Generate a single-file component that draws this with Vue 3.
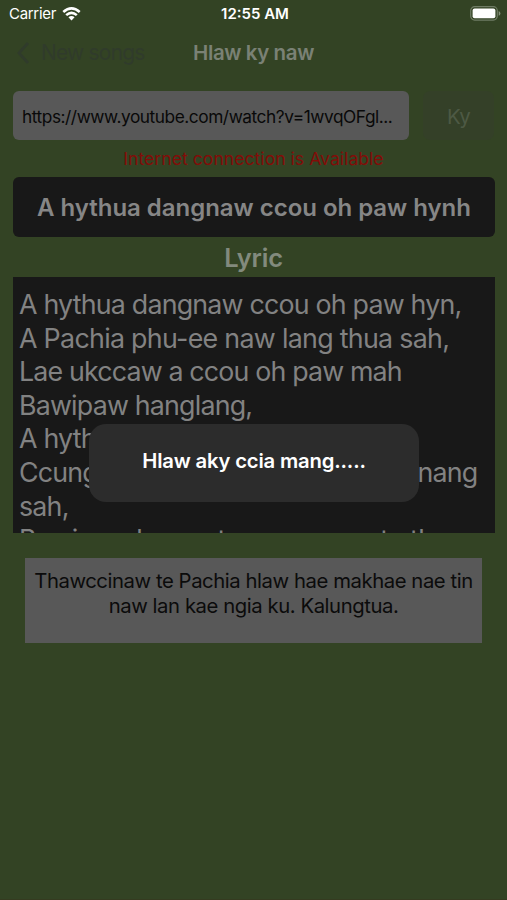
<script setup>
const lyrics = [
  { text: 'A hythua dangnaw ccou oh paw hyn,', cls: 'l1' },
  { text: 'A Pachia phu-ee naw lang thua sah,', cls: 'l2' },
  { text: 'Lae ukccaw a ccou oh paw mah', cls: 'l3' },
  { text: 'Bawipaw hanglang,', cls: 'l4' },
  { text: 'A hythua', cls: 'l5' },
  { text: 'Ccung', tail: 'nang', cls: 'l6' },
  { text: 'sah,', cls: 'l7' },
  { text: 'Bawipaw hanae ta ngae cana ta tha', cls: 'l8' },
]
</script>

<template>
  <main class="screen">
    <header class="status">
      <div class="carrier">
        <span class="carrier-name">Carrier</span>
        <svg class="wifi" viewBox="0 0 20 15" width="19" height="14">
          <path d="M10 14.4 L6.7 11 Q10 8.4 13.3 11 Z" fill="#fff" />
          <path d="M4.3 8.7 Q10 3.8 15.7 8.7 M1.2 5.3 Q10 -2.3 18.8 5.3" fill="none" stroke="#fff" stroke-width="2.8" />
        </svg>
      </div>
      <span class="time">12:55 AM</span>
      <div class="power">
        <svg viewBox="0 0 31 15" width="31" height="15">
          <rect x="0.7" y="0.7" width="26.6" height="13.4" rx="4" fill="none" stroke="#6f7c64" stroke-width="1.2" />
          <rect x="2.6" y="2.6" width="22.8" height="9.6" rx="2" fill="#fff" />
          <path d="M28.7 5 Q30.4 5.6 30.4 7.4 Q30.4 9.2 28.7 9.8 Z" fill="#85917b" />
        </svg>
      </div>
    </header>

    <nav class="nav">
      <div class="back">
        <svg viewBox="0 0 14 24" width="14" height="24">
          <path d="M12 2 L3 12 L12 22" fill="none" stroke="#303b2b" stroke-width="2.8" />
        </svg>
        <span class="back-label">New songs</span>
      </div>
      <span class="title">Hlaw ky naw</span>
    </nav>

    <div class="search">
      <div class="field"><span class="url">https://www.youtube.com/watch?v=1wvqOFgl...</span></div>
      <div class="go">Ky</div>
    </div>
    <p class="connection"><span>Internet connection is Available</span></p>
    <div class="song"><span>A hythua dangnaw ccou oh paw hynh</span></div>
    <h2 class="heading"><span>Lyric</span></h2>

    <section class="lyrics">
      <div v-for="line in lyrics" :key="line.cls" class="line">
        <span :class="line.cls">{{ line.text }}</span>
        <span v-if="line.tail" class="tail">{{ line.tail }}</span>
      </div>
    </section>

    <section class="note">
      <div class="n1">Thawccinaw te Pachia hlaw hae makhae nae tin</div>
      <div class="n2">naw lan kae ngia ku. Kalungtua.</div>
    </section>

    <div class="alert" role="dialog"><span>Hlaw aky ccia mang.....</span></div>
  </main>
</template>

<style>
body { background: #334324; }
</style>

<style scoped>
.screen {
  position: relative;
  box-sizing: border-box;
  width: 507px;
  height: 900px;
  overflow: hidden;
  background: #334324;
  border-bottom: 1px solid #353b20;
  font-family: Inter, "Liberation Sans", sans-serif;
  white-space: nowrap;
}
.status {
  display: grid;
  grid-template-columns: 1fr auto 1fr;
  align-items: center;
  height: 27px;
  padding: 0 6px 0 9px;
  color: #fff;
}
.carrier { display: flex; align-items: center; gap: 6px; font-size: 15px; letter-spacing: -0.3px; }
.time { font-size: 15px; font-weight: 600; }
.power { display: flex; justify-content: flex-end; }
.nav {
  display: grid;
  grid-template-columns: 1fr auto 1fr;
  align-items: center;
  height: 51px;
  padding: 0 16px;
}
.back { display: flex; align-items: center; gap: 11px; color: #303b2b; font-size: 21px; letter-spacing: -0.8px; }
.title { color: #7a8175; font-size: 20.5px; font-weight: 600; letter-spacing: -0.4px; }
.search { display: flex; gap: 14px; padding: 13px 13px 0; height: 49px; }
.field {
  display: flex;
  align-items: center;
  width: 396px;
  box-sizing: border-box;
  padding: 1px 9px 0;
  border-radius: 6px;
  background: #585858;
  color: #090909;
  font-size: 17.3px;
  letter-spacing: -0.45px;
}
.go {
  display: grid;
  place-items: center;
  width: 71px;
  padding-top: 1px;
  box-sizing: border-box;
  border-radius: 7px;
  background: #344028;
  color: #4d5944;
  font-size: 20.5px;
  letter-spacing: -0.8px;
}
.connection { height: 37px; margin: 0; line-height: 37px; text-align: center; color: #820d09; font-size: 17.65px; }
.song {
  display: grid;
  place-items: center;
  height: 60px;
  margin: 0 12px 0 13px;
  border-radius: 6px;
  background: #181818;
  color: #868686;
  font-size: 24px;
  font-weight: 600;
  letter-spacing: -0.03px;
}
.heading { height: 40px; margin: 0; line-height: 42px; text-align: center; color: #828a7d; font-size: 25.5px; font-weight: 600; letter-spacing: -0.2px; }
.lyrics {
  box-sizing: border-box;
  height: 256px;
  margin: 0 12px 0 13px;
  padding: 11px 7px 0 6px;
  overflow: hidden;
  background: #181818;
  color: #828282;
  font-size: 26.8px;
  letter-spacing: -0.8px;
}
.line { display: flex; justify-content: space-between; height: 33.6px; line-height: 33.6px; }
.l2 { letter-spacing: -0.7px; }
.l3 { letter-spacing: -0.84px; }
.l8 { letter-spacing: -0.62px; }
.tail { padding-right: 10.5px; }
.note {
  box-sizing: border-box;
  width: 457px;
  height: 85px;
  margin: 25px auto 0;
  padding-top: 10px;
  background: #585858;
  color: #0b0b0b;
  font-size: 20.3px;
  line-height: 25px;
  letter-spacing: -0.43px;
  text-align: center;
}
.alert {
  position: absolute;
  top: 424px;
  left: 89px;
  display: grid;
  place-items: center;
  width: 330px;
  height: 78px;
  padding-bottom: 6px;
  box-sizing: border-box;
  border-radius: 17px;
  background: #2c2c2c;
  color: #fff;
  font-size: 20.3px;
  font-weight: 600;
  letter-spacing: -0.18px;
}
</style>
